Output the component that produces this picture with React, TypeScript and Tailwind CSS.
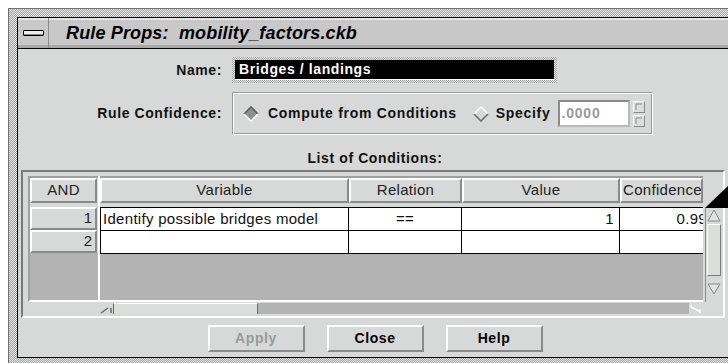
import React from "react";

const STIPPLE = "bg-[repeating-conic-gradient(#a2a2a2_0_25%,#e6e6e6_0_50%)] bg-size-[2px_2px]";
const RAISED = "border-2 border-t-white border-l-white border-b-[#8a8a8a] border-r-[#8a8a8a]";

function Diamond({ selected }: { selected?: boolean }) {
    return (
        <svg width="16" height="16" viewBox="0 0 16 16">
            <polygon points="8,1 15,8 8,15 1,8" fill={selected ? "#8f8f8f" : "#d6d9d7"} />
            <polyline points="1,8 8,1 15,8" fill="none" stroke={selected ? "#5e5e5e" : "#ffffff"} strokeWidth="1.6" />
            <polyline points="1,8 8,15 15,8" fill="none" stroke={selected ? "#ffffff" : "#6e6e6e"} strokeWidth="1.6" />
        </svg>
    );
}

function TitleBar() {
    return (
        <div className="h-[31px] flex items-center border-b border-black bg-[#c8c8c8] shadow-[inset_0_2px_0_#e4e4e4,inset_0_-3px_0_#a8a8a8]">
            {/* window menu button */}
            <div className="w-[31px] h-full flex items-center justify-center border-r border-[#8a8a8a]">
                <div className="w-[21px] h-[6px] border border-black rounded-[1px] bg-[#ececec] shadow-[inset_0_-1px_0_#888]" />
            </div>
            <span className="ml-[17px] text-[18px] font-bold italic tracking-[0.15px] leading-none text-black">
                Rule Props:&nbsp; mobility_factors.ckb
            </span>
        </div>
    );
}

function HeaderCell({ w, children, left }: { w: string; children: React.ReactNode; left?: boolean }) {
    return (
        <div className={`${w} h-[25px] ${RAISED} flex items-center overflow-hidden whitespace-nowrap text-[15px] tracking-[0.3px] text-[#222] ${left ? "pl-[1px]" : "justify-center"}`}>
            {children}
        </div>
    );
}

function Matrix() {
    const rows = [
        { n: 1, variable: "Identify possible bridges model", relation: "==", value: "1", conf: "0.99" },
        { n: 2, variable: "", relation: "", value: "", conf: "" },
    ];

    return (
        <div className={`ml-[3px] w-[704px] h-[148px] border-2 border-t-[#7a7a7a] border-l-[#7a7a7a] border-b-white border-r-white pl-[5px] pt-[4px]`}>
            <div className="flex">
                {/* row headers */}
                <div className="w-[70px] h-[126px] flex flex-col border-l-2 border-t-2 border-[#a0a0a0] border-b-2 border-b-white">
                    <HeaderCell w="w-[67px]">AND</HeaderCell>
                    <div className="h-[4px]" />
                    {rows.map((r) => (
                        <div key={r.n} className={`w-[67px] h-[23px] ${RAISED} flex items-center justify-end pr-[3px] text-[15px] text-[#222]`}>
                            {r.n}
                        </div>
                    ))}
                    <div className="flex-1 bg-[#b3b3b3]" />
                </div>
                <div className="w-[2px] h-[126px] bg-white" />

                {/* cells */}
                <div className="w-[603px] h-[126px] flex flex-col border-t-2 border-[#a0a0a0] border-b-2 border-b-white">
                    <div className="flex">
                        <HeaderCell w="w-[249px]">Variable</HeaderCell>
                        <HeaderCell w="w-[113px]">Relation</HeaderCell>
                        <HeaderCell w="w-[158px]">Value</HeaderCell>
                        <HeaderCell w="w-[83px]" left>Confidence</HeaderCell>
                    </div>
                    <div className="h-[4px]" />
                    <div className="border-t border-l border-black">
                        {rows.map((r) => (
                            <div key={r.n} className="flex h-[23px] border-b border-black bg-white text-[15px] tracking-[0.3px] text-[#111]">
                                <div className="w-[248px] border-r border-black pl-[2px] flex items-center whitespace-nowrap">{r.variable}</div>
                                <div className="w-[113px] border-r border-black flex items-center justify-center">{r.relation}</div>
                                <div className="w-[158px] border-r border-black flex items-center justify-end pr-[5px]">{r.value}</div>
                                <div className="w-[83px] flex items-center justify-end overflow-hidden whitespace-nowrap">
                                    <span className="mr-[-4px]">{r.conf}</span>
                                </div>
                            </div>
                        ))}
                    </div>
                    <div className="flex-1 bg-[#b3b3b3]" />
                </div>

                {/* vertical scrollbar */}
                <div className="ml-[2px] w-[16px] h-[126px] flex flex-col">
                    <div className="h-[32px]" />
                    <div className="flex-1 flex flex-col items-center border-l border-[#8a8a8a] pb-[7px]">
                        <svg width="14" height="15" viewBox="0 0 14 15">
                            <polygon points="7,2 13,13 1,13" fill="#e2e4e2" stroke="#8a8a8a" strokeWidth="1" />
                        </svg>
                        <div className={`mt-[1px] w-[14px] h-[52px] border border-t-white border-l-white border-b-[#7a7a7a] border-r-[#7a7a7a] bg-[#dcdedc]`} />
                        <div className="flex-1" />
                        <svg width="14" height="12" viewBox="0 0 14 12">
                            <polygon points="1,1 13,1 7,11" fill="#e2e4e2" stroke="#8a8a8a" strokeWidth="1" />
                        </svg>
                    </div>
                </div>
            </div>

            {/* horizontal scrollbar */}
            <div className="ml-[72px] mt-[1px] w-[603px] h-[11px] flex">
                <div className="w-[13px] h-full relative">
                    <svg width="13" height="11" viewBox="0 0 13 11">
                        <polyline points="1,10 8,5" stroke="#6a6a6a" strokeWidth="1.5" fill="none" />
                        <line x1="11" y1="5" x2="11" y2="10" stroke="#6a6a6a" strokeWidth="1.5" />
                    </svg>
                </div>
                <div className="w-[145px] h-full bg-[#dcdedc] border-t border-white border-l border-l-[#6a6a6a] border-r border-r-[#6a6a6a]" />
                <div className="flex-1 h-full bg-[#b3b3b3]" />
                <div className="w-[14px] h-full bg-[#d6d9d7]">
                    <svg width="14" height="11" viewBox="0 0 14 11">
                        <polyline points="2,2 2,4 12,9" stroke="#ffffff" strokeWidth="1.5" fill="none" />
                        <line x1="11" y1="6" x2="11" y2="10" stroke="#ffffff" strokeWidth="1.5" />
                    </svg>
                </div>
            </div>
        </div>
    );
}

function Body() {
    return (
        <div className="h-[308px] flex flex-col">
            {/* Name */}
            <div className="mt-[8px] h-[26px] flex items-center">
                <div className="w-[204px] text-right text-[14px] font-bold tracking-[0.6px]">Name:</div>
                <div className={`ml-[10px] w-[325px] h-[26px] p-[3px] ${STIPPLE}`}>
                    <div className="h-full bg-black flex items-center pl-[4px] border-b border-white text-white text-[14px] font-bold tracking-[0.6px]">
                        Bridges / landings
                    </div>
                </div>
            </div>

            {/* Rule Confidence */}
            <div className="mt-[9px] h-[43px] flex items-center">
                <div className="w-[204px] text-right text-[14px] font-bold tracking-[0.6px]">Rule Confidence:</div>
                <div className="ml-[10px] w-[421px] h-[43px] flex items-center pl-[10px] border border-t-[#9a9a9a] border-l-[#9a9a9a] border-b-white border-r-white shadow-[inset_1px_1px_0_#ffffff,inset_-1px_-1px_0_#9a9a9a]">
                    <Diamond selected />
                    <span className="ml-[9px] text-[14px] font-bold tracking-[0.7px]">Compute from Conditions</span>
                    <div className="ml-[16px]"><Diamond /></div>
                    <span className="ml-[7px] text-[14px] font-bold tracking-[0.7px]">Specify</span>
                    <div className="ml-[8px] w-[72px] h-[27px] bg-white border-2 border-t-[#8a8a8a] border-l-[#8a8a8a] border-b-[#b8b8b8] border-r-[#b8b8b8] flex items-center pl-[1px]">
                        <span className="text-[14px] font-bold tracking-[0.8px] text-[#9a9a9a]">.0000</span>
                    </div>
                    <div className="ml-[3px] w-[12px] flex flex-col gap-[2px]">
                        <div className="h-[12px] bg-[#dcdedc] border border-t-white border-l-white border-b-[#8a8a8a] border-r-[#8a8a8a]">
                            <svg width="10" height="10" viewBox="0 0 10 10"><polyline points="2,8 2,2 8,2" stroke="#8a8a8a" strokeWidth="1" fill="none" /></svg>
                        </div>
                        <div className="h-[12px] bg-[#dcdedc] border border-t-white border-l-white border-b-[#8a8a8a] border-r-[#8a8a8a]">
                            <svg width="10" height="10" viewBox="0 0 10 10"><polyline points="2,8 2,2 8,2" stroke="#8a8a8a" strokeWidth="1" fill="none" /></svg>
                        </div>
                    </div>
                </div>
            </div>

            {/* List of Conditions */}
            <div className="mt-[12px] h-[23px] text-center text-[14px] font-bold tracking-[0.6px] leading-[23px]">
                List of Conditions:
            </div>

            <Matrix />

            {/* Buttons */}
            <div className="mt-[7px] flex justify-center gap-[22px]">
                <button className={`w-[97px] h-[27px] ${RAISED} text-[14px] font-bold tracking-[0.6px] text-[#9a9a9a]`}>Apply</button>
                <button className={`w-[97px] h-[27px] ${RAISED} text-[14px] font-bold tracking-[0.6px] text-black`}>Close</button>
                <button className={`w-[97px] h-[27px] ${RAISED} text-[14px] font-bold tracking-[0.6px] text-black`}>Help</button>
            </div>
        </div>
    );
}

export default function App() {
    return (
        <div className="relative w-[728px] h-[363px] overflow-hidden bg-white font-['Liberation_Sans',Arial,sans-serif] text-[#111]">
            <div className={`ml-[8px] mt-[8px] w-[740px] h-[370px] border border-[#6e6e6e] p-[8px] ${STIPPLE}`}>
                <div className="w-[716px] border border-black bg-[#d6d9d7] flex flex-col">
                    <TitleBar />
                    <Body />
                </div>
            </div>
            {/* corner marker over the table */}
            <svg className="absolute left-[705px] top-[186px]" width="23" height="23" viewBox="0 0 23 23">
                <polygon points="0,22 23,0 23,22" fill="black" />
            </svg>
        </div>
    );
}
